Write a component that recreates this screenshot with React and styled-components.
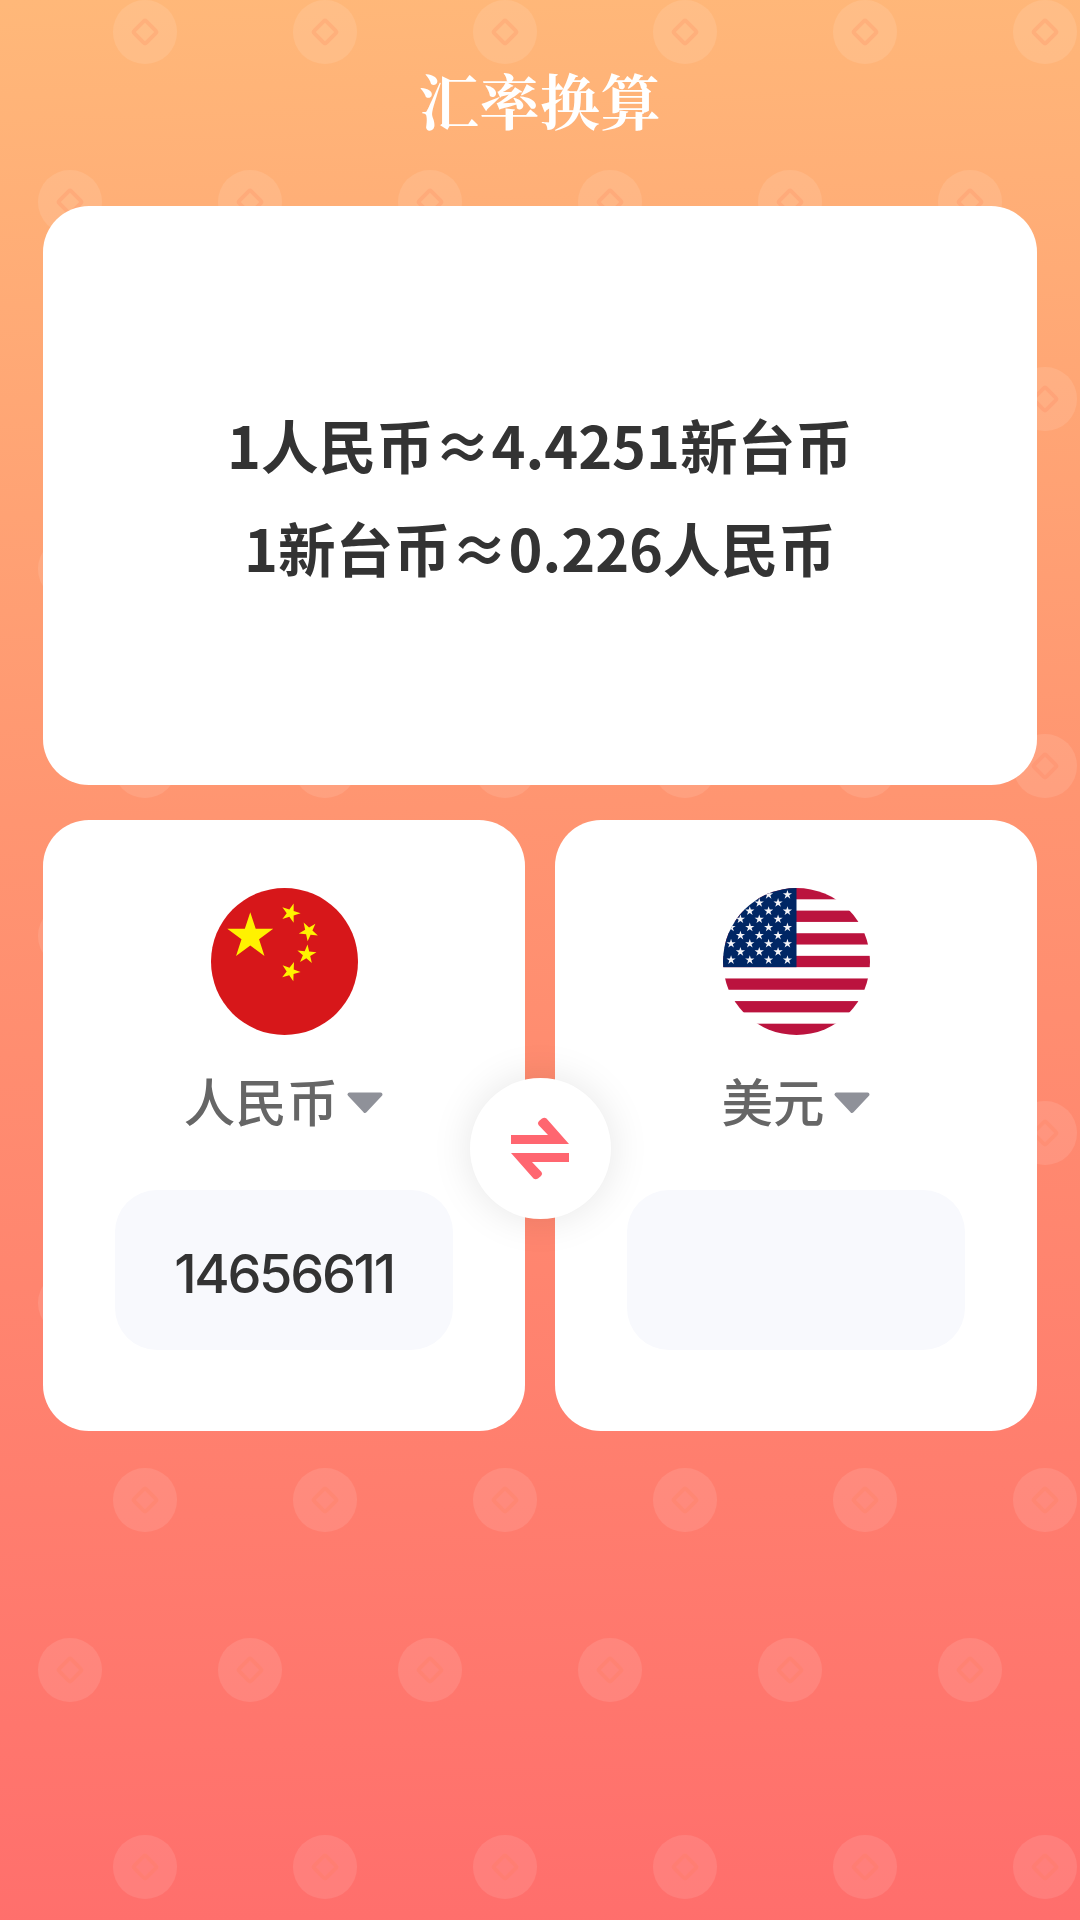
import React from 'react';
import styled, { createGlobalStyle } from 'styled-components';

const coinTile = `<svg xmlns='http://www.w3.org/2000/svg' width='180' height='367'><g><circle cx='145' cy='32' r='32' fill='white' fill-opacity='.1'/><rect x='136.5' y='23.5' width='17' height='17' rx='2' transform='rotate(45 145 32)' fill='none' stroke='#ff7a50' stroke-opacity='.2' stroke-width='4'/><circle cx='70' cy='202' r='32' fill='white' fill-opacity='.1'/><rect x='61.5' y='193.5' width='17' height='17' rx='2' transform='rotate(45 70 202)' fill='none' stroke='#ff7a50' stroke-opacity='.2' stroke-width='4'/></g></svg>`;

const GlobalStyle = createGlobalStyle`
  html, body {
    margin: 0;
    padding: 0;
  }
  body {
    font-family: "Noto Sans CJK SC", "Noto Sans", sans-serif;
  }
`;

const Page = styled.div`
  position: relative;
  width: 1080px;
  height: 1920px;
  box-sizing: border-box;
  padding: 0 43px;
  overflow: hidden;
  background-color: #ff9672;
  background-image: url("data:image/svg+xml,${encodeURIComponent(coinTile)}"),
    linear-gradient(178deg, #ffb879 0%, #ff9571 42%, #ff6e6c 100%);
  background-size: 180px 367px, 100% 100%;
  background-repeat: repeat, no-repeat;
`;

const Title = styled.h1`
  margin: 0;
  height: 206px;
  padding-top: 59px;
  box-sizing: border-box;
  text-align: center;
  color: #fff;
  font-family: "Noto Serif CJK SC", "Noto Sans CJK SC", serif;
  font-size: 60px;
  font-weight: 700;
  letter-spacing: 0.6px;
  line-height: 80px;
`;

const RateCard = styled.section`
  display: flex;
  flex-direction: column;
  justify-content: center;
  height: 579px;
  margin-bottom: 35px;
  background: #fff;
  border-radius: 46px;
  color: #333;
  font-size: 57.6px;
  font-weight: 700;
  line-height: 103px;
  text-align: center;
`;

const CardRow = styled.div`
  position: relative;
  display: flex;
  gap: 30px;
`;

const CurrencyCard = styled.div`
  display: flex;
  flex: 1;
  flex-direction: column;
  align-items: center;
  height: 611px;
  box-sizing: border-box;
  padding-top: 68px;
  background: #fff;
  border-radius: 46px;
`;

const FlagIcon = styled.svg`
  display: block;
  width: 147px;
  height: 147px;
`;

const CurrencyLabel = styled.div`
  display: flex;
  align-items: center;
  gap: 8px;
  height: 60px;
  margin-top: 35px;
  color: #666;
  font-size: 51.5px;
  font-weight: 500;
  line-height: 60px;
`;

const Caret = styled.svg`
  display: block;
  width: 38px;
  height: 24px;
  margin-top: 6px;
`;

const AmountBox = styled.div`
  display: flex;
  align-items: center;
  justify-content: center;
  width: 338px;
  height: 160px;
  box-sizing: border-box;
  padding-top: 6px;
  margin-top: 60px;
  background: #f8f9fd;
  border-radius: 42px;
  color: #333;
  font-family: Inter, "Liberation Sans", sans-serif;
  font-size: 54px;
  font-weight: 500;
  letter-spacing: -2.3px;
`;

const SwapButton = styled.button`
  position: absolute;
  top: 258px;
  left: 50%;
  display: flex;
  align-items: center;
  justify-content: center;
  width: 141px;
  height: 141px;
  padding: 0;
  margin-left: -70.5px;
  border: 0;
  border-radius: 50%;
  background: #fff;
  box-shadow: 0 0 40px rgba(0, 0, 0, 0.1);
`;

const SwapIcon = styled.svg`
  display: block;
  width: 58px;
  height: 63px;
`;

const starPath = (cx, cy, r, rotate = 0) => {
  const points = [];
  for (let i = 0; i < 10; i++) {
    const radius = i % 2 === 0 ? r : r * 0.382;
    const angle = ((-90 + rotate + i * 36) * Math.PI) / 180;
    points.push(`${(cx + radius * Math.cos(angle)).toFixed(2)},${(cy + radius * Math.sin(angle)).toFixed(2)}`);
  }
  return points.join(' ');
};

const ChinaFlag = () => (
  <FlagIcon viewBox="0 0 146 146">
    <circle cx="73" cy="73" r="73" fill="#d7171a" />
    <polygon points={starPath(39, 48, 24)} fill="#fff200" />
    <polygon points={starPath(79, 25, 10, 18)} fill="#fff200" />
    <polygon points={starPath(97, 43, 10, 42)} fill="#fff200" />
    <polygon points={starPath(95, 66, 10, 5)} fill="#fff200" />
    <polygon points={starPath(79, 83, 10, 20)} fill="#fff200" />
  </FlagIcon>
);

const STRIPE = 146 / 13;
const stripes = [0, 2, 4, 6, 8, 10, 12];
const starRows = [0, 1, 2, 3, 4, 5, 6, 7, 8];

const UsaFlag = () => (
  <FlagIcon viewBox="0 0 146 146">
    <defs>
      <clipPath id="usaClip">
        <circle cx="73" cy="73" r="73" />
      </clipPath>
    </defs>
    <g clipPath="url(#usaClip)">
      <rect width="146" height="146" fill="#fff" />
      {stripes.map((i) => (
        <rect key={i} y={i * STRIPE} width="146" height={STRIPE} fill="#bb133e" />
      ))}
      <rect width="73" height={STRIPE * 7} fill="#002664" />
      {starRows.map((row) =>
        (row % 2 === 0 ? [64, 45.3, 26.6, 8] : [54.7, 36, 17.3]).map((x) => (
          <polygon key={`${row}-${x}`} points={starPath(x, 6.7 + row * 8.1, 4.8)} fill="#f4f4f8" />
        )),
      )}
    </g>
  </FlagIcon>
);

const CaretDown = () => (
  <Caret viewBox="0 0 38 24">
    <path d="M3.5 3.5 H34.5 L19 20 Z" fill="#8f9199" stroke="#8f9199" strokeWidth="4" strokeLinejoin="round" />
  </Caret>
);

const swapArrow = 'M0 18 H37 L27.5 8 Q26 6 28 4 L31 1.5 Q33.5 0 35.5 1.5 L58 27 H0 Z';

const Swap = () => (
  <SwapIcon viewBox="0 0 58 63">
    <g fill="#ff6670">
      <path d={swapArrow} />
      <path d={swapArrow} transform="rotate(180 29 31.5)" />
    </g>
  </SwapIcon>
);

const App = () => (
  <Page>
    <GlobalStyle />
    <Title>汇率换算</Title>
    <RateCard>
      <div>1人民币≈4.4251新台币</div>
      <div>1新台币≈0.226人民币</div>
    </RateCard>
    <CardRow>
      <CurrencyCard>
        <ChinaFlag />
        <CurrencyLabel>
          人民币
          <CaretDown />
        </CurrencyLabel>
        <AmountBox>14656611</AmountBox>
      </CurrencyCard>
      <CurrencyCard>
        <UsaFlag />
        <CurrencyLabel>
          美元
          <CaretDown />
        </CurrencyLabel>
        <AmountBox />
      </CurrencyCard>
      <SwapButton>
        <Swap />
      </SwapButton>
    </CardRow>
  </Page>
);

export default App;
